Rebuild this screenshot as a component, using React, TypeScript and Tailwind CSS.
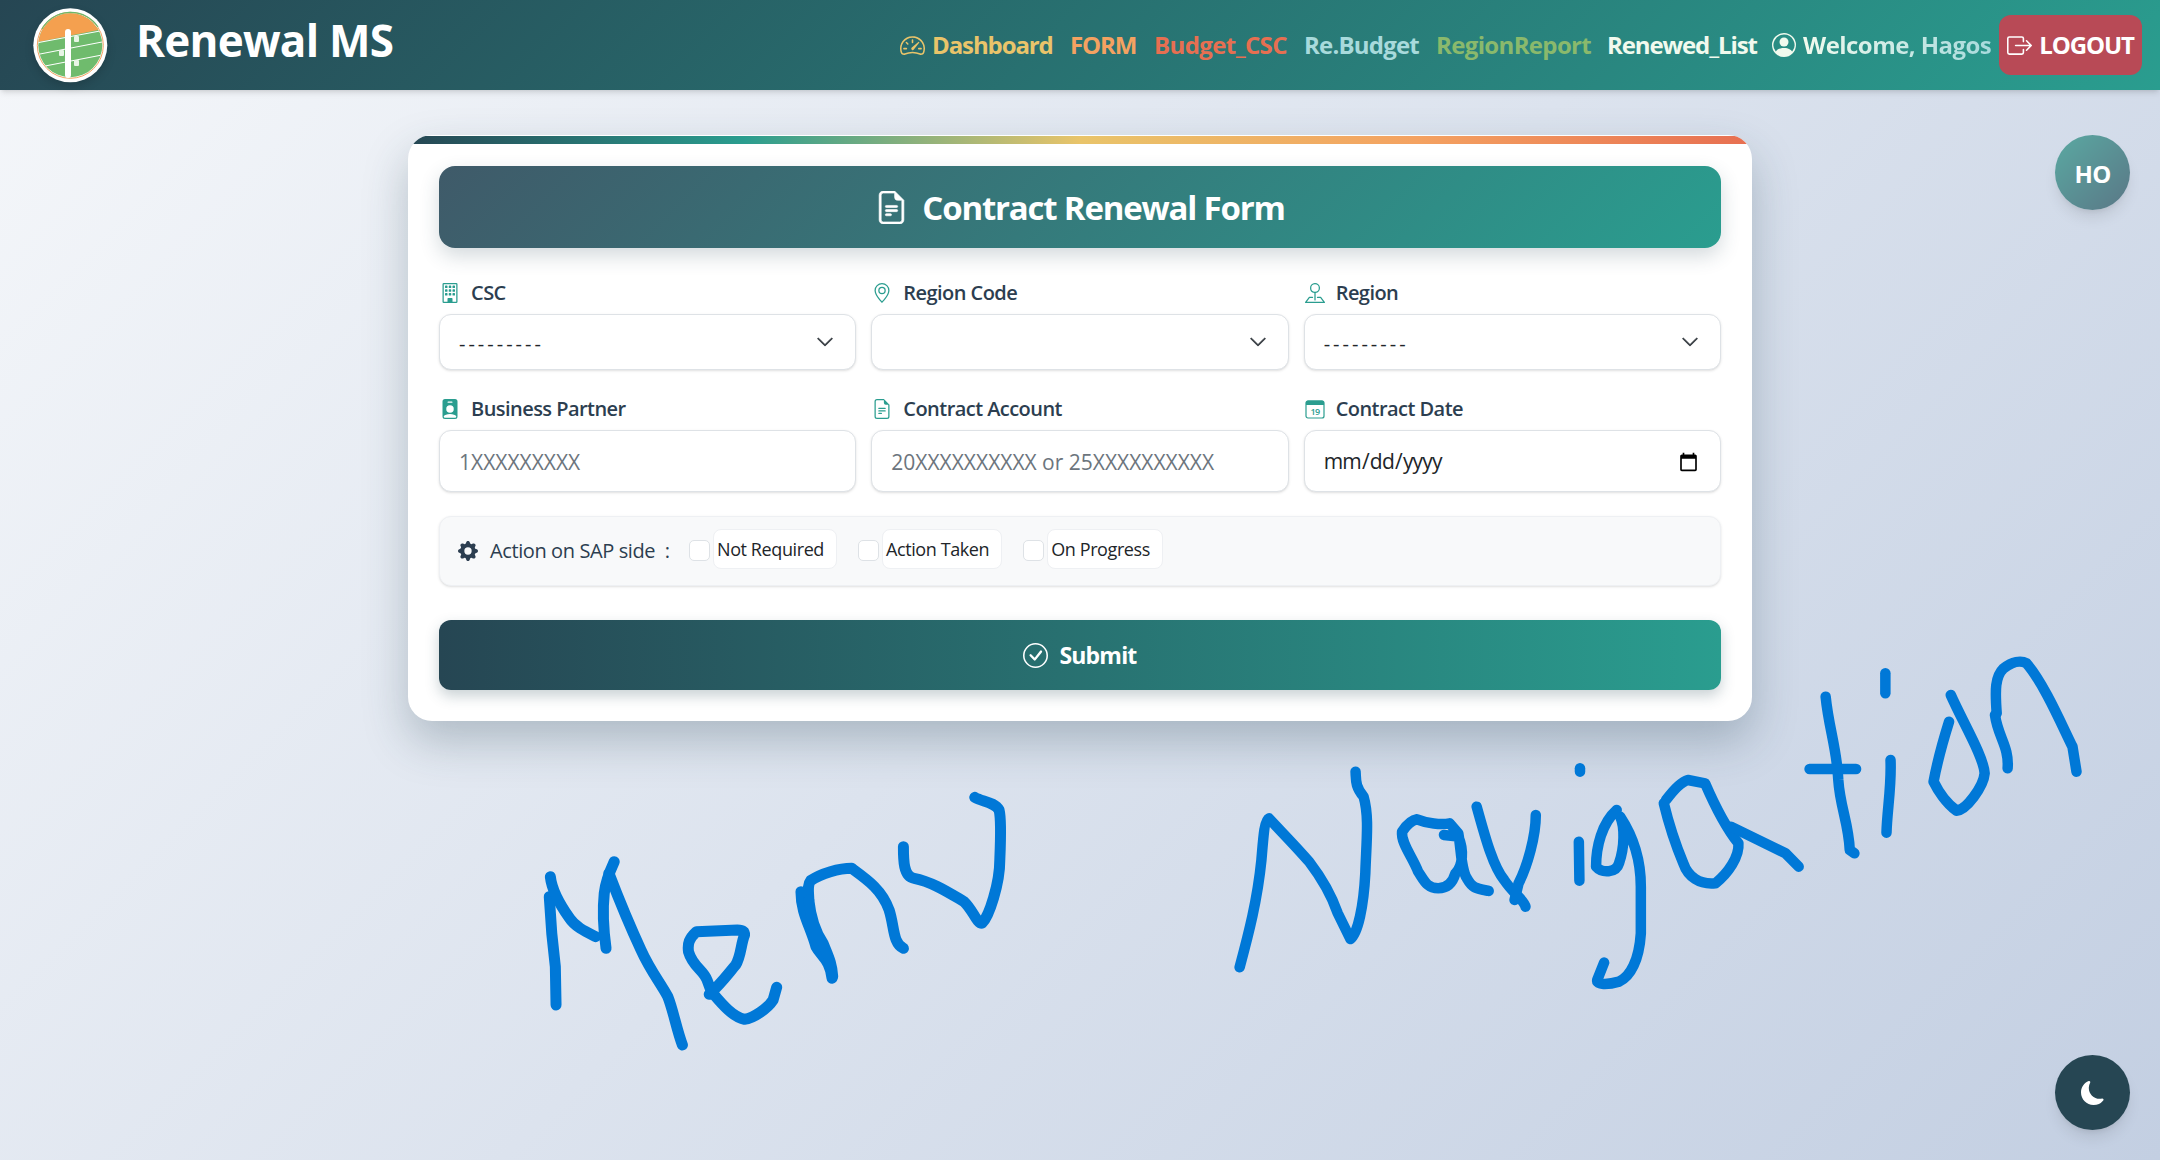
import React from "react";
import {
  BsBoxArrowRight,
  BsBuilding,
  BsCheckCircle,
  BsChevronDown,
  BsFileEarmarkText,
  BsGearFill,
  BsGeoAlt,
  BsMoonFill,
  BsPersonBadgeFill,
  BsPersonCircle,
  BsPinMap,
  BsSpeedometer2,
} from "react-icons/bs";

const Logo = () => (
  <svg viewBox="13 9 75 75" className="w-[75px] h-[75px] shrink-0 drop-shadow-lg">
    <defs>
      <clipPath id="disc">
        <circle cx="50.3" cy="46.3" r="32" />
      </clipPath>
    </defs>
    <circle cx="50.3" cy="46.3" r="37" fill="#ffffff" />
    <circle cx="50.3" cy="46.3" r="33" fill="none" stroke="#f4a261" strokeWidth="1" />
    <path d="M22 30 A33 33 0 0 1 78 28" fill="none" stroke="#6cb86b" strokeWidth="1.2" />
    <g clipPath="url(#disc)">
      <rect x="13" y="9" width="75" height="75" fill="#6fbb6d" />
      <path d="M13 44 L88 29 L88 9 L13 9 Z" fill="#f4a04f" />
      <path d="M16 44 L80 32 M20 55 L82 43 M25 67 L82 56" stroke="#ffffff" strokeWidth="1" fill="none" />
    </g>
    <rect x="45" y="30" width="6" height="49" rx="3" fill="#ffffff" />
    <rect x="54" y="37" width="5" height="6" rx="1" fill="#e8f5e6" />
    <rect x="39" y="51" width="5" height="6" rx="1" fill="#e8f5e6" />
    <rect x="54" y="61" width="5" height="6" rx="1" fill="#e8f5e6" />
  </svg>
);

const CalendarIcon = () => (
  <svg width="20" height="20" viewBox="0 0 20 20" fill="none">
    <rect x="1" y="2" width="18" height="17" rx="2" stroke="#2a9d8f" strokeWidth="1.2" />
    <path d="M1 3.5 a2 2 0 0 1 2-2 h14 a2 2 0 0 1 2 2 V6 H1 Z" fill="#2a9d8f" />
    <text x="10" y="16" textAnchor="middle" fontSize="9" fill="#2a9d8f">
      19
    </text>
  </svg>
);

const Label = ({ icon, text }: { icon: React.ReactNode; text: string }) => (
  <label className="flex items-center h-[30px] mb-[6px] text-[20px] font-semibold text-[#2c3e50] tracking-[-0.55px]">
    <span className="w-[32px] pl-[1px] flex text-[#2a9d8f] text-[20px]">{icon}</span>
    {text}
  </label>
);

const SelectField = ({ icon, label, value }: { icon: React.ReactNode; label: string; value: string }) => (
  <div>
    <Label icon={icon} text={label} />
    <div className="relative">
      <select className="appearance-none w-full h-[56px] bg-white border border-[#dee2e6] rounded-xl pl-[19px] pt-[4px] text-[20px] tracking-[3px] text-[#212529] shadow-sm">
        <option>{value}</option>
      </select>
      <BsChevronDown className="absolute right-[22px] top-[19px] text-[18px] text-[#343a40] stroke-[0.8px]" />
    </div>
  </div>
);

const TextField = ({ icon, label, placeholder }: { icon: React.ReactNode; label: string; placeholder: string }) => (
  <div>
    <Label icon={icon} text={label} />
    <input
      placeholder={placeholder}
      className="w-full h-[62px] bg-white border border-[#dee2e6] rounded-xl px-[19px] pt-[2px] text-[21px] text-[#212529] placeholder:text-[#6c757d] shadow-sm"
    />
  </div>
);

const Check = ({ text }: { text: string }) => (
  <label className="flex items-center">
    <input type="checkbox" className="appearance-none w-[21px] h-[21px] bg-white border border-[#dee2e6] rounded-[5px] mt-[2px] mr-[3px]" />
    <span className="h-[40px] flex items-center pl-[3px] pr-[12px] bg-white border border-[#eef0f3] rounded-lg text-[18px] tracking-[-0.4px] text-[#212529]">
      {text}
    </span>
  </label>
);

const Scribble = () => (
  <svg
    width="2160"
    height="1160"
    fill="none"
    stroke="#0078d7"
    strokeLinecap="round"
    strokeLinejoin="round"
    className="absolute left-0 top-0 pointer-events-none"
  >
    {/* Menu */}
    <g transform="translate(500 760) scale(0.357 0.3333)">
      {[
        "M138 410 L145 520 L155 620 L157 735",
        "M141 350 C145 390 165 430 195 475 C210 500 240 515 268 530",
        "M297 565 C290 510 288 440 292 400 C295 370 305 340 320 305",
        "M305 340 C330 410 360 490 395 570 C420 630 450 670 470 710 C485 750 495 810 511 855",
        "M586 703 C620 670 640 640 660 615 C675 590 675 550 685 525 C685 515 680 510 665 510 L550 515 C530 535 525 550 528 575 C540 620 570 630 580 660 L592 695 C620 730 650 770 685 778 C710 775 750 745 765 720 L775 682",
        "M865 420 C865 400 860 375 870 362 C900 340 950 325 985 325 C1030 360 1070 390 1090 450 C1105 500 1100 550 1130 565",
        "M1130 260 C1130 300 1130 350 1160 355 C1210 365 1260 400 1300 425 C1325 450 1335 490 1350 490 C1370 470 1400 370 1400 300 C1402 250 1405 180 1398 150 C1385 125 1350 125 1330 112",
        "M843 395 C843 460 870 500 885 560 C900 590 925 600 930 655",
        "M865 420 C870 470 880 510 905 550 C920 590 930 610 932 650",
      ].map((d) => (
        <path key={d} d={d} strokeWidth="11" vectorEffect="non-scaling-stroke" />
      ))}
    </g>
    {/* Navigation */}
    <g transform="translate(1200 640) scale(0.574 0.3333)">
      {[
        "M69 982 C85 880 100 780 107 660 C110 600 112 540 120 535 C150 590 170 625 190 665 C210 710 230 770 240 820 L262 897 C275 880 285 800 288 700 C290 600 295 530 285 470 C270 440 272 420 271 395",
        "M425 585 L450 590 C460 630 458 680 445 700 C440 730 430 745 415 745 C395 745 390 720 380 695 C370 650 350 610 352 575 C360 555 370 540 378 538 C395 550 420 555 435 550 L450 580 C455 630 455 690 465 715 C475 745 480 745 503 753",
        "M482 500 C495 580 510 680 530 720 C545 760 565 780 567 800",
        "M585 525 C585 590 570 680 555 730 L548 780",
        "M660 605 L661 722",
        "M662 385 L662 395",
        "M726 510 C700 550 690 620 690 680 C700 700 725 700 730 670 C740 620 740 560 732 530 C755 590 768 660 768 740 L768 880 C765 960 750 1010 730 1025 C710 1035 690 1035 692 1020 L704 968",
        "M812 480 C825 450 840 425 850 420 L880 430 C895 490 915 560 938 610 C940 650 920 700 898 730 C870 735 850 710 842 670 C825 600 815 540 808 490",
        "M925 560 L1020 640 L1043 680",
        "M1090 170 C1095 260 1110 330 1112 420 C1115 500 1130 550 1132 630 L1140 640",
        "M1062 387 L1143 387",
        "M1194 100 L1194 160",
        "M1203 360 C1205 440 1197 510 1196 578",
        "M1308 165 C1330 250 1365 350 1367 400 C1365 440 1335 510 1318 512 C1300 490 1285 450 1278 425 C1285 360 1295 300 1305 245",
        "M1385 225 C1390 290 1410 320 1407 385",
        "M1388 220 C1385 150 1385 110 1400 85 C1415 65 1430 60 1440 70 C1470 130 1500 250 1520 320 L1527 395",
      ].map((d) => (
        <path key={d} d={d} strokeWidth="10.5" vectorEffect="non-scaling-stroke" />
      ))}
    </g>
  </svg>
);

export default function App() {
  return (
    <div className="relative h-[1160px] overflow-hidden bg-[linear-gradient(135deg,#f5f7fa_0%,#c3cfe2_100%)] font-['Open_Sans','Noto_Sans',sans-serif]">
      {/* Navbar */}
      <nav className="h-[90px] flex items-center justify-between pl-[33px] pr-[18px] bg-[linear-gradient(135deg,#264653,#2a9d8f)] shadow-md">
        <div className="flex items-center">
          <Logo />
          <span className="ml-[28px] pb-[10px] text-[44px] font-bold text-white tracking-[-0.75px]">Renewal MS</span>
        </div>
        <div className="flex items-center text-[24px] font-bold tracking-[-1.1px] whitespace-nowrap">
          <a className="flex items-center gap-[7px] w-[170px] text-[#e9c46a]">
            <BsSpeedometer2 className="text-[25px]" />
            Dashboard
          </a>
          <a className="w-[84px] text-[#f4a261]">FORM</a>
          <a className="w-[150px] tracking-[-0.6px] text-[#e76f51]">Budget_CSC</a>
          <a className="w-[132px] tracking-[-0.8px] text-[#a8dadc]">Re.Budget</a>
          <a className="w-[171px] tracking-[-0.65px] text-[#8ab96c]">RegionReport</a>
          <a className="w-[165px] text-[#f1faee]">Renewed_List</a>
          <span className="flex items-center gap-[7px] w-[227px] tracking-[-0.55px]">
            <BsPersonCircle className="text-[24px] text-[#f1faee]" />
            <span className="bg-[linear-gradient(90deg,#f1faee,#a8dadc)] bg-clip-text text-transparent">Welcome, Hagos</span>
          </span>
          <a className="flex items-center justify-center gap-[7px] w-[143px] h-[60px] rounded-xl bg-[#b84a56] text-white">
            <BsBoxArrowRight className="text-[25px]" />
            LOGOUT
          </a>
        </div>
      </nav>

      {/* Form card */}
      <main className="relative w-[1344px] mx-auto mt-[45px] h-[586px] bg-white rounded-3xl shadow-[0_20px_45px_rgba(38,70,83,0.28)] overflow-hidden px-[31px] pt-[31px]">
        <div className="absolute left-0 right-0 top-[1px] h-[8px] bg-[linear-gradient(90deg,#264653,#2a9d8f,#e9c46a,#f4a261,#e76f51)]" />
        <div className="h-[82px] flex items-center justify-center gap-[14px] rounded-2xl bg-[linear-gradient(135deg,#3f5a69,#2a9d8f)] shadow-[0_8px_20px_rgba(38,70,83,0.2)] text-white">
          <BsFileEarmarkText className="text-[33px] stroke-[0.3px]" />
          <h1 className="pt-[2px] text-[33px] font-bold tracking-[-1.2px]">Contract Renewal Form</h1>
        </div>

        <div className="grid grid-cols-3 gap-x-[15px] mt-[30px]">
          <SelectField icon={<BsBuilding />} label="CSC" value="---------" />
          <SelectField icon={<BsGeoAlt />} label="Region Code" value="" />
          <SelectField icon={<BsPinMap />} label="Region" value="---------" />
        </div>

        <div className="grid grid-cols-3 gap-x-[15px] mt-[24px]">
          <TextField icon={<BsPersonBadgeFill />} label="Business Partner" placeholder="1XXXXXXXXX" />
          <TextField icon={<BsFileEarmarkText />} label="Contract Account" placeholder="20XXXXXXXXXX or 25XXXXXXXXXX" />
          <div>
            <Label icon={<CalendarIcon />} text="Contract Date" />
            <input
              type="date"
              className="w-full h-[62px] bg-white border border-[#dee2e6] rounded-xl pl-[18px] pr-[19px] pt-[2px] text-[21px] tracking-[-0.8px] text-[#212529] shadow-sm"
            />
          </div>
        </div>

        <div className="h-[70px] mt-[24px] flex items-center pl-[18px] bg-[#f8f9fa] border border-[#eef0f3] rounded-xl shadow-sm">
          <BsGearFill className="text-[20px] text-[#2c3e50]" />
          <span className="ml-[12px] w-[199px] text-[20px] tracking-[-0.4px] text-[#2c3e50]">Action on SAP side&nbsp; :</span>
          <div className="flex gap-[21px] mb-[4px]">
            <Check text="Not Required" />
            <Check text="Action Taken" />
            <Check text="On Progress" />
          </div>
        </div>

        <button className="w-full h-[70px] mt-[34px] flex items-center justify-center gap-[11px] rounded-xl bg-[linear-gradient(90deg,#264653,#2a9d8f)] shadow-[0_6px_14px_rgba(38,70,83,0.25)] text-white text-[23px] font-bold tracking-[-0.8px]">
          <BsCheckCircle className="text-[25px]" />
          Submit
        </button>
      </main>

      <Scribble />

      {/* Floating buttons */}
      <div className="absolute right-[30px] top-[135px] w-[75px] h-[75px] pt-[2px] rounded-full flex items-center justify-center bg-[linear-gradient(135deg,#5aa9a2,#5a7786)] shadow-lg text-white text-[24px] font-bold tracking-[-0.8px]">
        HO
      </div>
      <div className="absolute right-[30px] bottom-[30px] w-[75px] h-[75px] rounded-full flex items-center justify-center bg-[#264653] shadow-lg text-white text-[24px]">
        <BsMoonFill />
      </div>
    </div>
  );
}
